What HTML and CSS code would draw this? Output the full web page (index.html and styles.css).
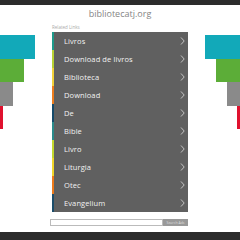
FILE: index.html
```html
<!DOCTYPE html>
<html lang="en">
<head>
    <meta charset="UTF-8">
    <meta name="viewport" content="width=device-width, initial-scale=1.0">
    <title>bibliotecatj.org</title>
    <link rel="stylesheet" href="styles.css">
</head>
<body>

    <div class="topbar"></div>

    <header class="site-title">bibliotecatj.org</header>

    <div class="main">
        <div class="deco deco-left">
            <span class="bar teal"></span>
            <span class="bar green"></span>
            <span class="bar gray"></span>
            <span class="bar red"></span>
        </div>

        <div class="center">
            <div class="label">Related Links</div>
            <ul class="links">
                <li class="c1"><span>Livros</span><svg viewBox="0 0 5 8"><path d="M1 0.5 L4.2 4 L1 7.5"/></svg></li>
                <li class="c2"><span>Download de livros</span><svg viewBox="0 0 5 8"><path d="M1 0.5 L4.2 4 L1 7.5"/></svg></li>
                <li class="c3"><span>Biblioteca</span><svg viewBox="0 0 5 8"><path d="M1 0.5 L4.2 4 L1 7.5"/></svg></li>
                <li class="c4"><span>Download</span><svg viewBox="0 0 5 8"><path d="M1 0.5 L4.2 4 L1 7.5"/></svg></li>
                <li class="c5"><span>De</span><svg viewBox="0 0 5 8"><path d="M1 0.5 L4.2 4 L1 7.5"/></svg></li>
                <li class="c6"><span>Bible</span><svg viewBox="0 0 5 8"><path d="M1 0.5 L4.2 4 L1 7.5"/></svg></li>
                <li class="c7"><span>Livro</span><svg viewBox="0 0 5 8"><path d="M1 0.5 L4.2 4 L1 7.5"/></svg></li>
                <li class="c8"><span>Liturgia</span><svg viewBox="0 0 5 8"><path d="M1 0.5 L4.2 4 L1 7.5"/></svg></li>
                <li class="c9"><span>Otec</span><svg viewBox="0 0 5 8"><path d="M1 0.5 L4.2 4 L1 7.5"/></svg></li>
                <li class="c10"><span>Evangelium</span><svg viewBox="0 0 5 8"><path d="M1 0.5 L4.2 4 L1 7.5"/></svg></li>
            </ul>
            <form class="search">
                <input type="text">
                <button type="button">Search Ads</button>
            </form>
        </div>

        <div class="deco deco-right">
            <span class="bar teal"></span>
            <span class="bar green"></span>
            <span class="bar gray"></span>
            <span class="bar red"></span>
        </div>
    </div>

    <footer class="bottombar"></footer>

</body>
</html>
```

FILE: styles.css
```css
* {
    margin: 0;
    padding: 0;
    box-sizing: border-box;
}

body {
    background-color: #fff;
    font-family: 'Open Sans', sans-serif;
    width: 240px;
    height: 240px;
    overflow: hidden;
    display: flex;
    flex-direction: column;
}

.topbar {
    height: 5px;
    background-color: #2c2c2c;
}

.site-title {
    height: 17px;
    line-height: 18px;
    text-align: center;
    font-size: 9px;
    color: #858585;
}

.main {
    display: grid;
    grid-template-columns: 52px 136px 52px;
}

.deco {
    display: flex;
    flex-direction: column;
    padding-top: 13px;
}

.deco-left {
    align-items: flex-start;
}

.deco-right {
    align-items: flex-end;
}

.bar {
    display: block;
    height: 23.5px;
}

.teal { width: 35px; background-color: #12a9b9; }
.green { width: 24px; background-color: #5cad38; }
.gray { width: 13px; background-color: #8a8a8a; }
.red { width: 3px; background-color: #e0112e; }

.label {
    height: 10px;
    line-height: 10px;
    font-size: 4.5px;
    color: #aaa;
}

.links {
    list-style: none;
}

.links li {
    height: 18px;
    display: flex;
    align-items: center;
    justify-content: space-between;
    padding: 0 3px 0 10px;
    background-color: #606060;
    border-left: 2px solid #606060;
    color: #f2f2f2;
    font-size: 7.5px;
    letter-spacing: 0.1px;
}

.links svg {
    width: 5px;
    height: 8px;
    fill: none;
    stroke: #eee;
    stroke-width: 0.7;
}

/* coloured stripe on the left of each row */
.links .c1 { border-left-color: #1e9a8a; }
.links .c2 { border-left-color: #b8d233; }
.links .c3 { border-left-color: #f2d23a; }
.links .c4 { border-left-color: #ee7d1d; }
.links .c5 { border-left-color: #154a6a; }
.links .c6 { border-left-color: #2a8a8a; }
.links .c7 { border-left-color: #c3d82e; }
.links .c8 { border-left-color: #f0d62a; }
.links .c9 { border-left-color: #ee7a1a; }
.links .c10 { border-left-color: #1c4d6a; }

.search {
    display: flex;
    margin: 7px 0 0 -2px;
    height: 7px;
}

.search input {
    flex: 1;
    width: 0;
    min-width: 0;
    height: 7px;
    border: 1px solid #bbb;
    background-color: #fff;
}

.search button {
    width: 25px;
    height: 7px;
    border: none;
    background-color: #999;
    color: #ddd;
    font-size: 3.5px;
    font-family: 'Open Sans', sans-serif;
}

.bottombar {
    margin-top: auto;
    height: 8px;
    background-color: #2c2c2c;
}
```
